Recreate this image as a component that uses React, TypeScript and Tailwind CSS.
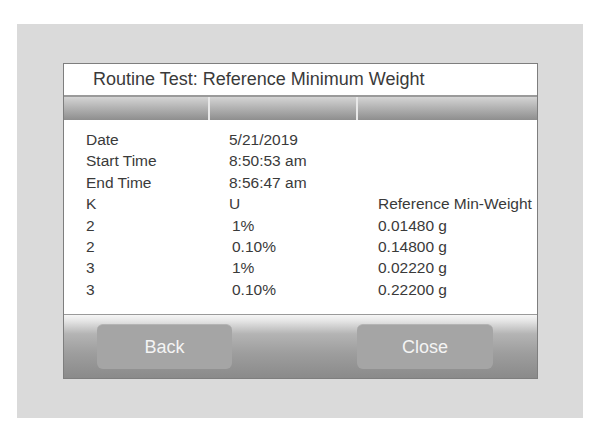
export default function App() {
  const rows: [string, string, string, boolean][] = [
    ["Date", "5/21/2019", "", false],
    ["Start Time", "8:50:53 am", "", false],
    ["End Time", "8:56:47 am", "", false],
    ["K", "U", "Reference Min-Weight", false],
    ["2", "1%", "0.01480 g", true],
    ["2", "0.10%", "0.14800 g", true],
    ["3", "1%", "0.02220 g", true],
    ["3", "0.10%", "0.22200 g", true],
  ];
  return (
    <div
      className="w-[600px] h-[438px] bg-white pt-[24px] pl-[17px]"
      style={{ fontFamily: '"Liberation Sans", Arial, sans-serif' }}
    >
      <div className="w-[566px] h-[394px] bg-[#dadada] pt-[39px] pl-[46px]">
        <div className="w-[475px] h-[316px] border border-[#7e7e7e] bg-white flex flex-col">
          <div className="h-[33px] flex items-center pl-[29px] text-[18px] text-[#3a3a3a] border-b-2 border-[#9a9a9a] pb-[1px]">
            Routine Test: Reference Minimum Weight
          </div>
          <div className="h-[23px] flex bg-[linear-gradient(to_bottom,#d4d4d4,#b4b4b4_45%,#8e8e8e)]">
            <div className="w-[146px] border-r-2 border-[#e8e8e8]" />
            <div className="w-[148px] border-r-2 border-[#e8e8e8]" />
            <div className="flex-1" />
          </div>
          <div className="flex-1 pt-[9px] pl-[22px] text-[15.5px] leading-[21.4px] text-[#3a3a3a]">
            {rows.map(([a, b, c, ind], i) => (
              <div key={i} className="flex">
                <div className="w-[143px]">{a}</div>
                <div className={`w-[149px] ${ind ? "pl-[3px]" : ""}`}>{b}</div>
                <div>{c}</div>
              </div>
            ))}
          </div>
          <div className="h-[64px] border-t border-[#9a9a9a] bg-[linear-gradient(to_bottom,#f6f6f6_0%,#e4e4e4_10%,#b4b4b4_30%,#9e9e9e_60%,#8a8a8a_100%)] flex items-start pt-[9px] pl-[33px] gap-[125px]">
            <div className="w-[135px] h-[45px] rounded-[6px] bg-[#a5a5a5] border-t border-[#b4b4b4] flex items-center justify-center text-[18px] text-[#f4f4f4]">
              Back
            </div>
            <div className="w-[136px] h-[45px] rounded-[6px] bg-[#a5a5a5] border-t border-[#b4b4b4] flex items-center justify-center text-[18px] text-[#f4f4f4]">
              Close
            </div>
          </div>
        </div>
      </div>
    </div>
  );
}
